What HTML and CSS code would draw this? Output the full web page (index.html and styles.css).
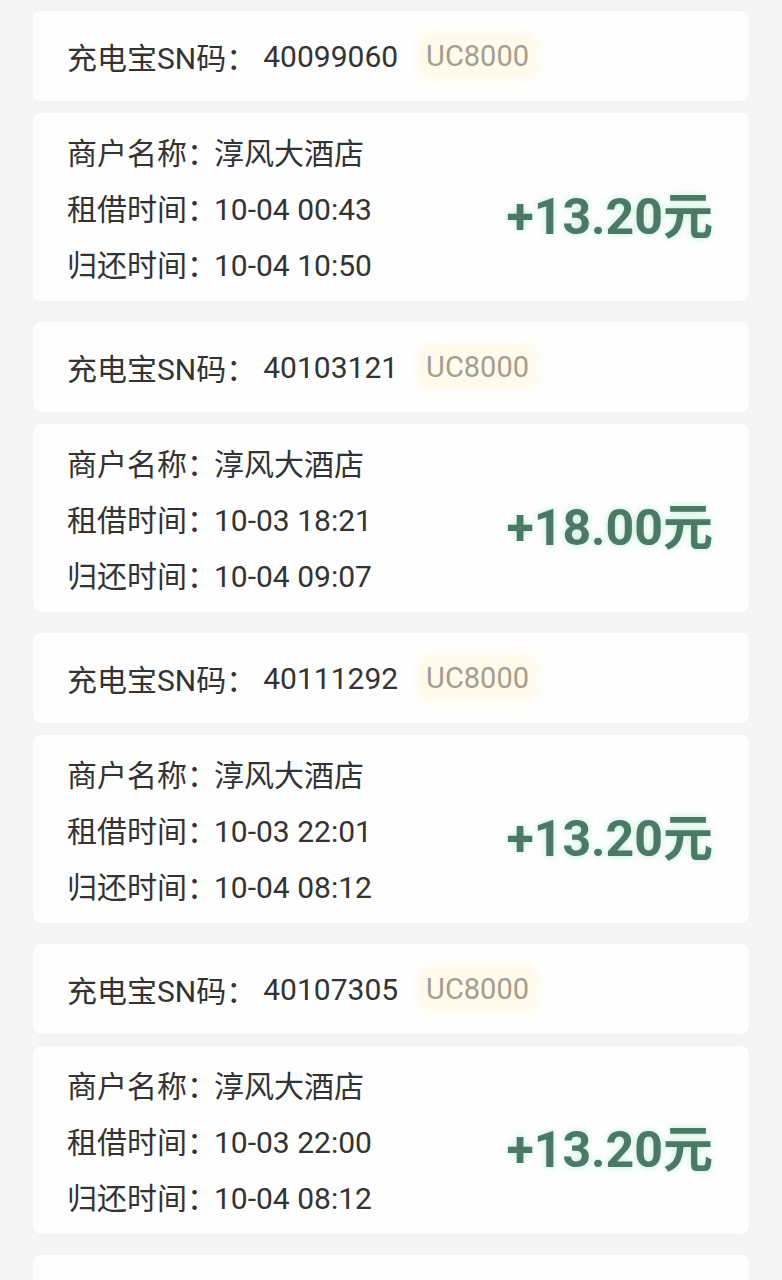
FILE: index.html
```html
<!DOCTYPE html>
<html lang="zh-CN">
<head>
  <meta charset="UTF-8" />
  <meta name="viewport" content="width=device-width, initial-scale=1.0"/>
  <title>订单记录</title>
  <link rel="stylesheet" href="styles.css">
</head>
<body>

  <div class="list">

    <div class="record">
      <div class="card head">
        <span class="label">充电宝SN码：</span><span class="sn">40099060</span>
        <span class="tag">UC8000</span>
      </div>
      <div class="card body">
        <div class="info">
          <p><span class="label">商户名称：</span>淳风大酒店</p>
          <p><span class="label">租借时间：</span>10-04 00:43</p>
          <p><span class="label">归还时间：</span>10-04 10:50</p>
        </div>
        <div class="amount">+13.20元</div>
      </div>
    </div>

    <div class="record">
      <div class="card head">
        <span class="label">充电宝SN码：</span><span class="sn">40103121</span>
        <span class="tag">UC8000</span>
      </div>
      <div class="card body">
        <div class="info">
          <p><span class="label">商户名称：</span>淳风大酒店</p>
          <p><span class="label">租借时间：</span>10-03 18:21</p>
          <p><span class="label">归还时间：</span>10-04 09:07</p>
        </div>
        <div class="amount">+18.00元</div>
      </div>
    </div>

    <div class="record">
      <div class="card head">
        <span class="label">充电宝SN码：</span><span class="sn">40111292</span>
        <span class="tag">UC8000</span>
      </div>
      <div class="card body">
        <div class="info">
          <p><span class="label">商户名称：</span>淳风大酒店</p>
          <p><span class="label">租借时间：</span>10-03 22:01</p>
          <p><span class="label">归还时间：</span>10-04 08:12</p>
        </div>
        <div class="amount">+13.20元</div>
      </div>
    </div>

    <div class="record">
      <div class="card head">
        <span class="label">充电宝SN码：</span><span class="sn">40107305</span>
        <span class="tag">UC8000</span>
      </div>
      <div class="card body">
        <div class="info">
          <p><span class="label">商户名称：</span>淳风大酒店</p>
          <p><span class="label">租借时间：</span>10-03 22:00</p>
          <p><span class="label">归还时间：</span>10-04 08:12</p>
        </div>
        <div class="amount">+13.20元</div>
      </div>
    </div>

    <div class="record">
      <div class="card head"></div>
    </div>

  </div>

</body>
</html>
```

FILE: styles.css
```css
body {
  margin: 0;
  background-color: #f5f5f5;
  color: #333;
  font-family: Roboto, "Noto Sans CJK SC", sans-serif;
  font-size: 30px;
}

.list {
  padding: 11px 33px 0;
}

.record {
  display: flex;
  flex-direction: column;
  gap: 12px;
  margin-bottom: 21px;
}

.card {
  background-color: #fefefe;
  border-radius: 8px;
  box-shadow: 0 0 6px rgba(0, 0, 0, 0.02);
  padding: 0 36px 0 34px;
}

.head {
  height: 90px;
  display: flex;
  align-items: center;
}

.sn {
  margin-left: 10px;
}

.tag {
  margin-left: 22px;
  padding: 0 6px;
  color: #a59e8c;
  font-size: 29px;
  line-height: 40px;
  border-radius: 8px;
  background-color: #fffaeb;
  box-shadow: 0 0 10px 4px #fffaeb;
}

.body {
  height: 188px;
  box-sizing: border-box;
  padding-top: 13px;
  padding-bottom: 7px;
  display: flex;
  align-items: center;
  justify-content: space-between;
}

.info p {
  margin: 0;
  line-height: 56px;
}

.label {
  margin-right: -3px;
}

.amount {
  font-size: 50px;
  font-weight: bold;
  color: #4d7868;
  text-shadow: 0 0 6px rgba(90, 220, 160, 0.45);
  margin-top: 4px;
}
```
